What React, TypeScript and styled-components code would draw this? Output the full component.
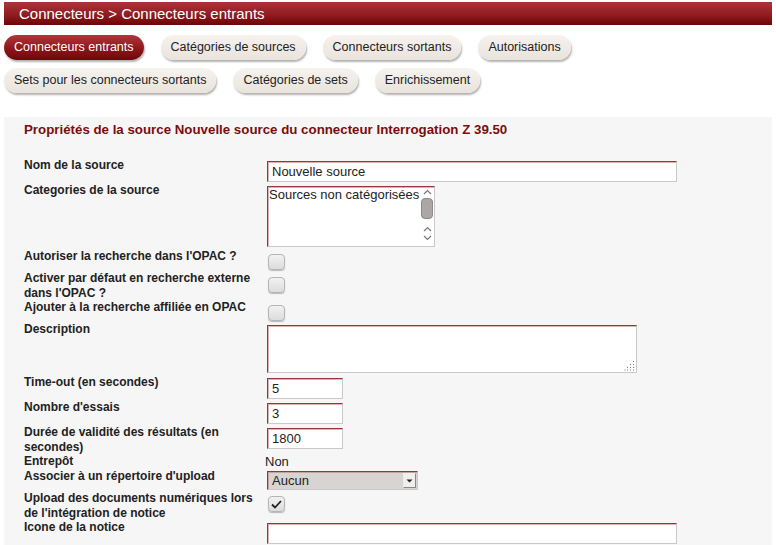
import React from 'react'
import styled, { createGlobalStyle, css } from 'styled-components'

const GlobalStyle = createGlobalStyle`
  html, body {
    margin: 0;
    padding: 0;
    background: #fff;
    font-family: "Liberation Sans", Arial, sans-serif;
    color: #222;
  }
`

const Page = styled.div`
  width: 776px;
  height: 545px;
  overflow: hidden;
  padding: 2px 4px 0 4px;
  box-sizing: border-box;
`

const TitleBar = styled.div`
  height: 23px;
  background: linear-gradient(#ad353a, #8c1a1e 60%, #6e0404);
  color: #fff;
  font-size: 15px;
  line-height: 23px;
  padding-left: 15px;
`

const Tabs = styled.div`
  display: flex;
  flex-direction: column;
  gap: 8px;
  padding-top: 10px;
`

const TabRow = styled.div`
  display: flex;
  gap: 17px;
`

const Tab = styled.div<{ active?: boolean }>`
  height: 25px;
  line-height: 25px;
  padding: 0 10px;
  border-radius: 13px;
  font-size: 12.5px;
  color: #222;
  background: linear-gradient(#f6f2ee, #e9e3dc);
  box-shadow: 1px 2px 2px rgba(0, 0, 0, 0.3);
  white-space: nowrap;
  ${p => p.active && css`
    color: #fff;
    background: linear-gradient(#b2353b, #8a1419 60%, #700707);
  `}
`

const Panel = styled.div`
  margin-top: 24px;
  background: #f6f6f6;
  padding: 6px 20px 0 20px;
  height: 440px;
`

const PanelTitle = styled.h3`
  margin: 0;
  font-size: 13.3px;
  font-weight: bold;
  color: #7a0d0d;
  line-height: 14px;
`

const Form = styled.div`
  margin-top: 21px;
  display: grid;
  grid-template-columns: 243px 1fr;
  align-items: start;
`

const Label = styled.div`
  font-size: 12px;
  font-weight: bold;
  line-height: 14.5px;
  padding-right: 8px;
  color: #222;
`

const fieldBorder = css`
  border: 1px solid #c9c9c9;
  border-top-color: #9b3434;
  border-left-color: #9b3434;
  box-shadow: inset 1px 1px 0 rgba(190, 120, 120, 0.55);
  box-sizing: border-box;
  background: #fff;
`

const TextInput = styled.div<{ w: number }>`
  ${fieldBorder};
  width: ${p => p.w}px;
  height: 21px;
  margin: 3px 0 1px 0;
  font-size: 13px;
  line-height: 19px;
  padding-left: 4px;
  color: #222;
`

const ListBox = styled.div`
  ${fieldBorder};
  width: 168px;
  height: 61px;
  margin: 3px 0 2px 0;
  display: flex;
  font-size: 13px;
  line-height: 16px;
`

const ListText = styled.div`
  flex: 1;
  padding-left: 1px;
  white-space: nowrap;
  overflow: hidden;
`

const Scroll = styled.div`
  width: 14px;
  display: flex;
  flex-direction: column;
  align-items: center;
  padding: 2px 0 2px 0;
  box-sizing: border-box;
  gap: 3px;
`

const Thumb = styled.div`
  width: 12px;
  height: 21px;
  border-radius: 4px;
  background: #aca6a4;
  border: 1px solid #8e8886;
  box-sizing: border-box;
  margin-bottom: 4px;
`

const TextArea = styled.div`
  ${fieldBorder};
  width: 370px;
  height: 48px;
  margin: 3px 0 2px 0;
  position: relative;
`

const Grip = styled.svg`
  position: absolute;
  right: 1px;
  bottom: 1px;
`

const Check = styled.div<{ top?: number }>`
  width: 17px;
  height: 16px;
  margin: ${p => p.top ?? 5}px 0 1px 1px;
  border-radius: 4px;
  border: 1px solid #b5b5b5;
  box-sizing: border-box;
  background: linear-gradient(#f2f2f2, #dcdcdc);
  box-shadow: 0 1px 1px rgba(0, 0, 0, 0.25);
  display: flex;
  align-items: center;
  justify-content: center;
`

const Plain = styled.div`
  font-size: 13px;
  line-height: 15px;
  margin-left: -2px;
`

const Select = styled.div`
  ${fieldBorder};
  background: #d8d4d1;
  width: 151px;
  height: 19px;
  margin: 2px 0 1px 0;
  display: flex;
  font-size: 13px;
  line-height: 17px;
`

const SelectText = styled.div`
  flex: 1;
  padding-left: 4px;
`

const SelectBtn = styled.div`
  width: 13px;
  height: 15px;
  margin: 1px 1px 0 0;
  background: #f0efee;
  border: 1px solid #888;
  border-top-color: #eee;
  border-left-color: #eee;
  box-sizing: border-box;
  display: flex;
  align-items: center;
  justify-content: center;
`

const Chevron = ({ up }: { up?: boolean }) => (
  <svg width="9" height="6" viewBox="0 0 9 6" style={{ flexShrink: 0 }}>
    <path d={up ? 'M1 5 L4.5 1.5 L8 5' : 'M1 1 L4.5 4.5 L8 1'} fill="none" stroke="#777" strokeWidth="1.2" />
  </svg>
)

const tabs1 = ['Connecteurs entrants', 'Catégories de sources', 'Connecteurs sortants', 'Autorisations']
const tabs2 = ['Sets pour les connecteurs sortants', 'Catégories de sets', 'Enrichissement']

export default function App() {
  return (
    <Page>
      <GlobalStyle />
      <TitleBar>Connecteurs &gt; Connecteurs entrants</TitleBar>
      <Tabs>
        <TabRow>
          {tabs1.map((t, i) => <Tab key={t} active={i === 0}>{t}</Tab>)}
        </TabRow>
        <TabRow>
          {tabs2.map(t => <Tab key={t}>{t}</Tab>)}
        </TabRow>
      </Tabs>
      <Panel>
        <PanelTitle>Propriétés de la source Nouvelle source du connecteur Interrogation Z 39.50</PanelTitle>
        <Form>
          <Label>Nom de la source</Label>
          <TextInput w={410}>Nouvelle source</TextInput>

          <Label>Categories de la source</Label>
          <ListBox>
            <ListText>Sources non catégorisées</ListText>
            <Scroll>
              <Chevron up />
              <Thumb />
              <Chevron up />
              <Chevron />
            </Scroll>
          </ListBox>

          <Label>Autoriser la recherche dans l'OPAC ?</Label>
          <Check />

          <Label>Activer par défaut en recherche externe dans l'OPAC ?</Label>
          <Check top={6} />

          <Label>Ajouter à la recherche affiliée en OPAC</Label>
          <Check />

          <Label>Description</Label>
          <TextArea>
            <Grip width="11" height="11" viewBox="0 0 11 11">
              {[[9, 1], [9, 4], [6, 4], [9, 7], [6, 7], [3, 7], [9, 9.5], [6, 9.5], [3, 9.5], [0.5, 9.5]].map(([x, y], i) => (
                <rect key={i} x={x} y={y} width="1" height="1" fill="#777" />
              ))}
            </Grip>
          </TextArea>

          <Label>Time-out (en secondes)</Label>
          <TextInput w={76}>5</TextInput>

          <Label>Nombre d'essais</Label>
          <TextInput w={76}>3</TextInput>

          <Label>Durée de validité des résultats (en secondes)</Label>
          <TextInput w={76}>1800</TextInput>

          <Label>Entrepôt</Label>
          <Plain>Non</Plain>

          <Label>Associer à un répertoire d'upload</Label>
          <Select>
            <SelectText>Aucun</SelectText>
            <SelectBtn>
              <svg width="7" height="4" viewBox="0 0 7 4"><path d="M0.5 0.5 L6.5 0.5 L3.5 3.5 Z" fill="#222" /></svg>
            </SelectBtn>
          </Select>

          <Label>Upload des documents numériques lors de l'intégration de notice</Label>
          <Check>
            <svg width="11" height="9" viewBox="0 0 11 9"><path d="M1 4.5 L4 7.5 L10 1" fill="none" stroke="#222" strokeWidth="1.8" /></svg>
          </Check>

          <Label>Icone de la notice</Label>
          <TextInput w={410} />
        </Form>
      </Panel>
    </Page>
  )
}
